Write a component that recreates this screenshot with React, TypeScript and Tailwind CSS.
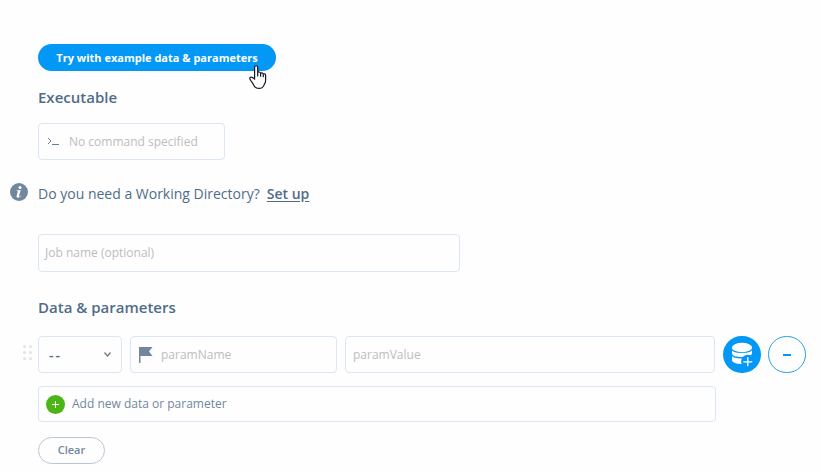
import React from "react";

const field = "flex items-center rounded border border-[#dce6f4] bg-[#fefefe]";

function PointerCursor() {
  return (
    <svg className="absolute left-[210px] top-[20px]" width="20" height="26" viewBox="0 0 20 26">
      <path
        d="M6.6 15.2V3.4c0-2.2 3.1-2.2 3.1 0v5.2c.5-1 2.8-.8 2.9.8.5-1 2.5-.7 2.7.8.7-.8 2.3-.5 2.3 1.1v5.2c0 2.2-1 3.5-1.6 4.6-.8 2.2-2.2 3.3-5 3.3-3 0-4.400-1.300-5.200-3.200-.8-1.900-2-3.100-3-4.700-.8-1.100-1.500-2.300-.7-3 1-.9 3.200.3 4.500 1.700z"
        fill="#fff"
        stroke="#17172b"
        strokeWidth="1.2"
        strokeLinejoin="round"
      />
      <path d="M9.700 8.500v4M12.600 9.300v3.500M15.300 10.200v3" stroke="#17172b" strokeWidth="1.200" />
    </svg>
  );
}

function InfoIcon() {
  return (
    <span className="-mt-1 flex h-[18px] w-[18px] shrink-0 items-center justify-center rounded-full bg-[#72879f]">
      <svg width="18" height="18" viewBox="0 0 18 18" fill="#fff">
        <circle cx="10" cy="4.600" r="1.500" />
        <path d="M6.300 7.500 10.700 7 9 13c-.2.900.5.700 1.500-.3l.4.400c-1.500 1.900-4.800 2.300-4.300-.1L7.800 8.500c0-.4-.5-.5-1.500-.5z" />
      </svg>
    </span>
  );
}

function DatabasePlus() {
  return (
    <svg width="38" height="37" viewBox="0 0 38 37">
      <path d="M9 11.500V24c0 2.500 4.500 4 10 4s10-1.500 10-4V11.500z" fill="#fff" />
      <path d="M8.500 12.500c1 5 19.500 5 21 0M8.500 18c1 5 19.500 5 21 0" fill="none" stroke="#0498f6" strokeWidth="1.300" />
      <ellipse cx="19" cy="11.500" rx="10" ry="4.700" fill="#fff" />
      <circle cx="24.800" cy="25.500" r="6.700" fill="#0498f6" />
      <path d="M24.800 21.300v9M20.300 25.800h9" stroke="#fff" strokeWidth="1.300" />
    </svg>
  );
}

export default function App() {
  return (
    <main className="flex h-[472px] w-[821px] flex-col items-start overflow-hidden bg-[#fefefe] pl-[38px] pt-[44px] font-['Open_Sans','Noto_Sans',sans-serif] text-[#516c89]">
      <div className="relative">
        <button className="flex h-[27px] w-[238px] items-center justify-center rounded-full bg-[#0498f6] text-[11px] font-bold leading-none text-white">
          Try with example data &amp; parameters
        </button>
        <PointerCursor />
      </div>

      <h2 className="mt-[16px] h-5 text-[15px] font-semibold leading-5">Executable</h2>
      <div className={`${field} mt-4 h-[37px] w-[187px] pl-2`}>
        <svg width="13" height="11" viewBox="0 0 13 11" fill="none" stroke="#667f99">
          <path d="m1 2 3 3-3 3M5 8.500h7" />
        </svg>
        <span className="ml-[9px] text-[12px] text-[#bdbdbd]">No command specified</span>
      </div>

      <div className="-ml-7 mt-[23px] flex h-[22px] items-center text-[14px] leading-[22px]">
        <InfoIcon />
        <span className="ml-[10px]">Do you need a Working Directory?</span>
        <a className="ml-[7px] font-semibold underline underline-offset-2">Set up</a>
      </div>

      <div className={`${field} mt-[29px] h-[38px] w-[422px] pl-1.5 text-[12px] text-[#bdbdbd]`}>
        Job name (optional)
      </div>

      <h2 className="mt-[25px] h-5 text-[15px] font-semibold leading-5">Data &amp; parameters</h2>

      <div className="-ml-4 mt-[19px] flex h-[37px] items-center">
        <div className="mr-[7px] grid w-[9px] grid-cols-2 gap-x-[3px] gap-y-[3px] pl-px pb-[5px]">
          {[0, 1, 2, 3, 4, 5].map((dot) => (
            <i key={dot} className="h-[3px] w-[3px] rounded-full bg-[#e2e2e2]" />
          ))}
        </div>
        <div className={`${field} h-[37px] w-[84px] justify-between pl-[10px] pr-[9px]`}>
          <span className="text-[14px] font-semibold tracking-[2px]">--</span>
          <svg width="9" height="7" viewBox="0 0 9 7" fill="none" stroke="#6d747b" strokeWidth="1.200">
            <path d="m1.500 1.500 3 3.500 3-3.500" />
          </svg>
        </div>
        <div className={`${field} ml-2 h-[37px] w-[207px] pl-2`}>
          <svg width="14" height="16" viewBox="0 0 14 16" fill="#72879f">
            <path d="M0 0h13.500L10 4.500 13.500 9H1.500v7H0z" />
          </svg>
          <span className="ml-[8px] text-[12px] text-[#bdbdbd]">paramName</span>
        </div>
        <div className={`${field} ml-2 h-[37px] w-[370px] pl-[7px] text-[12px] text-[#bdbdbd]`}>
          paramValue
        </div>
        <button className="ml-2 h-[37px] w-[38px] rounded-full bg-[#0498f6]">
          <DatabasePlus />
        </button>
        <button className="ml-[7px] flex h-[37px] w-[38px] items-center justify-center rounded-full border border-[#2a9deb]">
          <span className="h-[2px] w-2 bg-[#0498f6]" />
        </button>
      </div>

      <div className={`${field} mt-[13px] h-[36px] w-[678px] pl-[7px]`}>
        <span className="flex h-[19px] w-[19px] items-center justify-center rounded-full bg-[#4bb517]">
          <svg width="9" height="9" viewBox="0 0 9 9" stroke="#fff">
            <path d="M4.500 1v7M1 4.500h7" />
          </svg>
        </span>
        <span className="ml-[7px] text-[12px] text-[#72879f]">Add new data or parameter</span>
      </div>

      <button className="mt-[15px] flex h-[27px] w-[67px] items-center justify-center rounded-full border border-[#b9c5d5] text-[11px] font-semibold text-[#72879f]">
        Clear
      </button>
    </main>
  );
}
